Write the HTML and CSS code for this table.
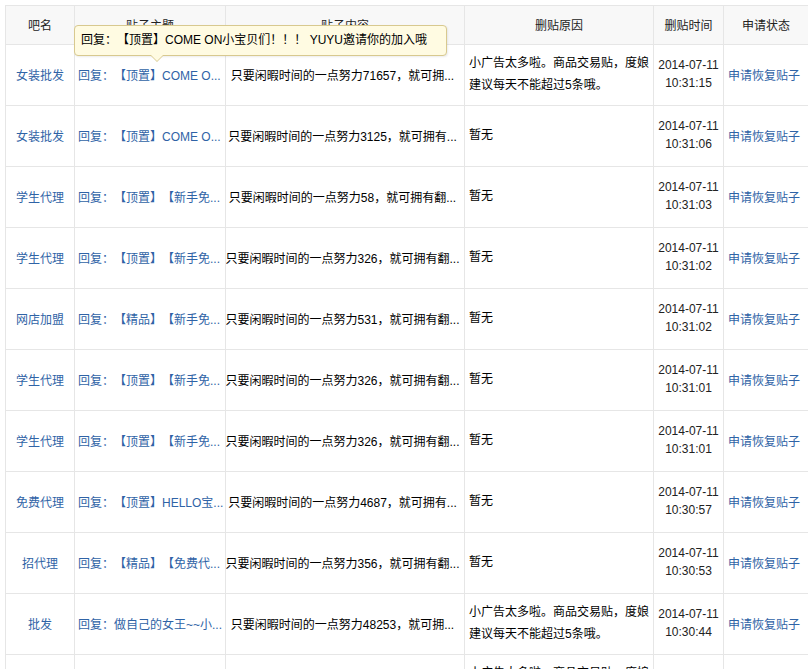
FILE: index.html
```html
<!DOCTYPE html>
<html lang="zh-CN">
<head>
<meta charset="utf-8">
<title>删贴记录</title>
<link rel="stylesheet" href="styles.css">
</head>
<body>
<div class="page">
  <div class="table">
    <div class="row head">
      <div class="cell">吧名</div>
      <div class="cell">贴子主题</div>
      <div class="cell">贴子内容</div>
      <div class="cell">删贴原因</div>
      <div class="cell">删贴时间</div>
      <div class="cell">申请状态</div>
    </div>

    <div class="row">
      <div class="cell"><a class="link">女装批发</a></div>
      <div class="cell title"><a class="link">回复：【顶置】COME O...</a></div>
      <div class="cell content">只要闲暇时间的一点努力71657，就可拥...</div>
      <div class="cell reason">小广告太多啦。商品交易贴，度娘<br>建议每天不能超过5条哦。</div>
      <div class="cell time">2014-07-11<br>10:31:15</div>
      <div class="cell status"><a class="link">申请恢复贴子</a></div>
    </div>

    <div class="row">
      <div class="cell"><a class="link">女装批发</a></div>
      <div class="cell title"><a class="link">回复：【顶置】COME O...</a></div>
      <div class="cell content">只要闲暇时间的一点努力3125，就可拥有...</div>
      <div class="cell reason">暂无</div>
      <div class="cell time">2014-07-11<br>10:31:06</div>
      <div class="cell status"><a class="link">申请恢复贴子</a></div>
    </div>

    <div class="row">
      <div class="cell"><a class="link">学生代理</a></div>
      <div class="cell title"><a class="link">回复：【顶置】【新手免...</a></div>
      <div class="cell content">只要闲暇时间的一点努力58，就可拥有翻...</div>
      <div class="cell reason">暂无</div>
      <div class="cell time">2014-07-11<br>10:31:03</div>
      <div class="cell status"><a class="link">申请恢复贴子</a></div>
    </div>

    <div class="row">
      <div class="cell"><a class="link">学生代理</a></div>
      <div class="cell title"><a class="link">回复：【顶置】【新手免...</a></div>
      <div class="cell content">只要闲暇时间的一点努力326，就可拥有翻...</div>
      <div class="cell reason">暂无</div>
      <div class="cell time">2014-07-11<br>10:31:02</div>
      <div class="cell status"><a class="link">申请恢复贴子</a></div>
    </div>

    <div class="row">
      <div class="cell"><a class="link">网店加盟</a></div>
      <div class="cell title"><a class="link">回复：【精品】【新手免...</a></div>
      <div class="cell content">只要闲暇时间的一点努力531，就可拥有翻...</div>
      <div class="cell reason">暂无</div>
      <div class="cell time">2014-07-11<br>10:31:02</div>
      <div class="cell status"><a class="link">申请恢复贴子</a></div>
    </div>

    <div class="row">
      <div class="cell"><a class="link">学生代理</a></div>
      <div class="cell title"><a class="link">回复：【顶置】【新手免...</a></div>
      <div class="cell content">只要闲暇时间的一点努力326，就可拥有翻...</div>
      <div class="cell reason">暂无</div>
      <div class="cell time">2014-07-11<br>10:31:01</div>
      <div class="cell status"><a class="link">申请恢复贴子</a></div>
    </div>

    <div class="row">
      <div class="cell"><a class="link">学生代理</a></div>
      <div class="cell title"><a class="link">回复：【顶置】【新手免...</a></div>
      <div class="cell content">只要闲暇时间的一点努力326，就可拥有翻...</div>
      <div class="cell reason">暂无</div>
      <div class="cell time">2014-07-11<br>10:31:01</div>
      <div class="cell status"><a class="link">申请恢复贴子</a></div>
    </div>

    <div class="row">
      <div class="cell"><a class="link">免费代理</a></div>
      <div class="cell title"><a class="link">回复：【顶置】HELLO宝...</a></div>
      <div class="cell content">只要闲暇时间的一点努力4687，就可拥有...</div>
      <div class="cell reason">暂无</div>
      <div class="cell time">2014-07-11<br>10:30:57</div>
      <div class="cell status"><a class="link">申请恢复贴子</a></div>
    </div>

    <div class="row">
      <div class="cell"><a class="link">招代理</a></div>
      <div class="cell title"><a class="link">回复：【精品】【免费代...</a></div>
      <div class="cell content">只要闲暇时间的一点努力356，就可拥有翻...</div>
      <div class="cell reason">暂无</div>
      <div class="cell time">2014-07-11<br>10:30:53</div>
      <div class="cell status"><a class="link">申请恢复贴子</a></div>
    </div>

    <div class="row">
      <div class="cell"><a class="link">批发</a></div>
      <div class="cell title"><a class="link">回复：做自己的女王~~小...</a></div>
      <div class="cell content">只要闲暇时间的一点努力48253，就可拥...</div>
      <div class="cell reason">小广告太多啦。商品交易贴，度娘<br>建议每天不能超过5条哦。</div>
      <div class="cell time">2014-07-11<br>10:30:44</div>
      <div class="cell status"><a class="link">申请恢复贴子</a></div>
    </div>

    <div class="row">
      <div class="cell"><a class="link">女装批发</a></div>
      <div class="cell title"><a class="link">回复：【顶置】COME O...</a></div>
      <div class="cell content">只要闲暇时间的一点努力2871，就可拥有...</div>
      <div class="cell reason">小广告太多啦。商品交易贴，度娘<br>建议每天不能超过5条哦。</div>
      <div class="cell time">2014-07-11<br>10:30:40</div>
      <div class="cell status"><a class="link">申请恢复贴子</a></div>
    </div>
  </div>

  <div class="tip">回复：【顶置】COME ON小宝贝们！！！ YUYU邀请你的加入哦</div>
</div>
</body>
</html>
```
FILE: styles.css
```css
html, body {
  margin: 0;
  overflow: hidden;
  background: #fff;
}

body {
  font-family: "Liberation Sans", Arial, "Noto Sans CJK SC", sans-serif;
  font-size: 12px;
  color: #000;
  text-spacing-trim: space-all;
  text-autospace: no-autospace;
}

.page {
  position: relative;
  padding: 5px 0 0 5px;
}

.table {
  width: max-content;
  border-left: 1px solid #e6e6e6;
  border-top: 1px solid #e6e6e6;
}

.row {
  display: grid;
  grid-template-columns: 69px 151px 239px 189px 70px 85px;
}

.cell {
  box-sizing: border-box;
  height: 61px;
  padding-bottom: 2px;
  border-right: 1px solid #e6e6e6;
  border-bottom: 1px solid #e6e6e6;
  display: flex;
  align-items: center;
  justify-content: center;
  white-space: nowrap;
  overflow: hidden;
}

.head .cell {
  height: 39px;
  padding-bottom: 1px;
  background: #f8f8f8;
  color: #222;
}

.link {
  color: #2f63a6;
  text-decoration: none;
  cursor: pointer;
}

.title {
  justify-content: flex-start;
  padding-left: 3px;
}

.content {
  padding-right: 5px;
}

.status {
  padding-right: 4px;
}

.reason {
  justify-content: flex-start;
  padding-left: 4px;
  line-height: 22px;
  white-space: normal;
}

.time {
  display: block;
  padding-top: 11px;
  padding-bottom: 0;
  line-height: 18px;
  text-align: center;
  color: #222;
}

.tip {
  position: absolute;
  left: 74px;
  top: 25px;
  box-sizing: border-box;
  width: 373px;
  height: 31px;
  padding-left: 6px;
  line-height: 28px;
  background: #fffbe2;
  border: 1px solid #d8c98f;
  border-radius: 4px;
  box-shadow: 1px 1px 2px rgba(0, 0, 0, 0.08);
  white-space: nowrap;
}

.tip::before,
.tip::after {
  content: "";
  position: absolute;
  top: 100%;
  width: 0;
  height: 0;
  border-style: solid;
  border-color: transparent;
}

.tip::before {
  left: 75px;
  border-width: 7px 7px 0 7px;
  border-top-color: #d8c98f;
}

.tip::after {
  left: 76px;
  border-width: 6px 6px 0 6px;
  border-top-color: #fffbe2;
}
```
